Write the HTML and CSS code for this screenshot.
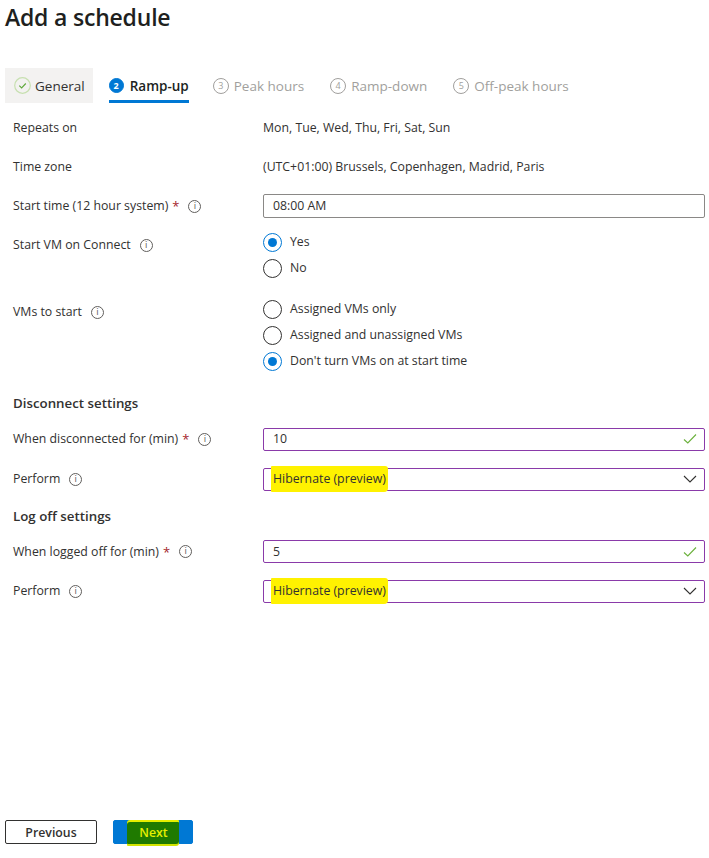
FILE: index.html
```html
<!DOCTYPE html>
<html>
<head>
<meta charset="utf-8">
<link rel="stylesheet" href="styles.css">
</head>
<body>
<div class="page">
  <h1 class="title">Add a schedule</h1>

  <div class="tabs">
    <div class="tab tab-done">
      <svg class="step-icon" width="17" height="17" viewBox="0 0 17 17"><circle cx="8.5" cy="8.5" r="7.8" fill="none" stroke="#c7e0b0" stroke-width="1.2"/><path d="M5.3 8.7 L7.6 10.9 L11.8 6.5" fill="none" stroke="#5ea83a" stroke-width="1.1"/></svg>
      <span>General</span>
    </div>
    <div class="tab tab-active">
      <span class="step-num step-num-active">2</span>
      <span>Ramp-up</span>
    </div>
    <div class="tab tab-disabled">
      <span class="step-num">3</span>
      <span>Peak hours</span>
    </div>
    <div class="tab tab-disabled">
      <span class="step-num">4</span>
      <span>Ramp-down</span>
    </div>
    <div class="tab tab-disabled">
      <span class="step-num">5</span>
      <span>Off-peak hours</span>
    </div>
  </div>

  <div class="form">
    <div class="row row-repeats">
      <div class="label">Repeats on</div>
      <div class="value">Mon, Tue, Wed, Thu, Fri, Sat, Sun</div>
    </div>
    <div class="row row-tz">
      <div class="label">Time zone</div>
      <div class="value">(UTC+01:00) Brussels, Copenhagen, Madrid, Paris</div>
    </div>
    <div class="row row-start">
      <div class="label">Start time (12 hour system)<span class="req">*</span><span class="info">i</span></div>
      <div class="value"><div class="input">08:00 AM</div></div>
    </div>
    <div class="row row-radio row-svc">
      <div class="label label-top">Start VM on Connect<span class="info">i</span></div>
      <div class="value radios">
        <div class="radio checked"><span class="dot"></span>Yes</div>
        <div class="radio"><span class="dot"></span>No</div>
      </div>
    </div>
    <div class="row row-radio row-vms">
      <div class="label label-top2">VMs to start<span class="info">i</span></div>
      <div class="value radios">
        <div class="radio"><span class="dot"></span>Assigned VMs only</div>
        <div class="radio"><span class="dot"></span>Assigned and unassigned VMs</div>
        <div class="radio checked"><span class="dot"></span>Don't turn VMs on at start time</div>
      </div>
    </div>

    <h2 class="section section-first">Disconnect settings</h2>
    <div class="row row-field">
      <div class="label">When disconnected for (min)<span class="req">*</span><span class="info">i</span></div>
      <div class="value"><div class="input input-valid"><span>10</span>
        <svg width="14" height="12" viewBox="0 0 14 12"><path d="M1 6.5 L4.8 10 L13 1.5" fill="none" stroke="#6bb13c" stroke-width="1.1"/></svg></div></div>
    </div>
    <div class="row row-field">
      <div class="label">Perform<span class="info">i</span></div>
      <div class="value"><div class="input input-valid"><span class="hl">Hibernate (preview)</span>
        <svg width="14" height="8" viewBox="0 0 14 8"><path d="M1 1 L7 7 L13 1" fill="none" stroke="#323130" stroke-width="1.1"/></svg></div></div>
    </div>

    <h2 class="section section-second">Log off settings</h2>
    <div class="row row-field row-field-short">
      <div class="label">When logged off for (min)<span class="req">*</span><span class="info">i</span></div>
      <div class="value"><div class="input input-valid"><span>5</span>
        <svg width="14" height="12" viewBox="0 0 14 12"><path d="M1 6.5 L4.8 10 L13 1.5" fill="none" stroke="#6bb13c" stroke-width="1.1"/></svg></div></div>
    </div>
    <div class="row row-field">
      <div class="label">Perform<span class="info">i</span></div>
      <div class="value"><div class="input input-valid"><span class="hl">Hibernate (preview)</span>
        <svg width="14" height="8" viewBox="0 0 14 8"><path d="M1 1 L7 7 L13 1" fill="none" stroke="#323130" stroke-width="1.1"/></svg></div></div>
    </div>
  </div>

  <div class="footer">
    <button class="btn btn-secondary">Previous</button>
    <button class="btn btn-primary"><span class="next-hl">Next</span></button>
  </div>
</div>
</body>
</html>
```

FILE: styles.css
```css
* { box-sizing: border-box; }
html, body { margin: 0; padding: 0; background: #ffffff; }
body {
  font-family: "Open Sans", "Noto Sans", "Liberation Sans", sans-serif;
  font-size: 12.3px;
  color: #323130;
}
.page {
  height: 858px;
  display: flex;
  flex-direction: column;
}
.title {
  margin: 0;
  padding: 0 0 0 5px;
  font-size: 23px;
  font-weight: 600;
  line-height: 34px;
  color: #201f1e;
  letter-spacing: -0.2px;
}
.tabs {
  display: flex;
  align-items: stretch;
  margin-top: 34px;
  padding-left: 5px;
  height: 35px;
  font-size: 13.5px;
}
.tab {
  display: flex;
  align-items: center;
  gap: 6px;
  white-space: nowrap;
}
.tab-done {
  background: #f3f2f1;
  padding: 0 8px 0 9px;
  gap: 4px;
}
.tab-active {
  margin-left: 16px;
  font-weight: 600;
  color: #201f1e;
  border-bottom: 3px solid #0078d4;
  padding-top: 3px;
  padding-right: 0;
}
.tab-disabled {
  margin-left: 24px;
  color: #a19f9d;
  gap: 5px;
}
.tab-disabled + .tab-disabled { margin-left: 26px; }
.step-num {
  width: 16px;
  height: 16px;
  border-radius: 50%;
  border: 1px solid #a19f9d;
  font-size: 9px;
  display: flex;
  align-items: center;
  justify-content: center;
  font-weight: 400;
  line-height: 1;
}
.step-num-active {
  width: 15px;
  height: 15px;
  background: #0078d4;
  border-color: #0078d4;
  color: #ffffff;
  font-weight: 700;
}
.form {
  padding-left: 13px;
  padding-top: 6px;
}
.row {
  display: grid;
  grid-template-columns: 250px 442px;
  align-items: center;
}
.row-repeats { height: 38px; }
.row-tz { height: 40px; }
.row-start { height: 38px; }
.row-radio { align-items: start; }
.row-svc { padding-top: 4px; }
.row-vms { padding-top: 15px; }
.label {
  display: flex;
  align-items: center;
  line-height: 20px;
  white-space: nowrap;
}
.label-top { margin-top: 6px; }
.label-top2 { margin-top: 6px; }
.value { line-height: 20px; white-space: nowrap; }
.req {
  color: #a4262c;
  margin-left: 4px;
  font-size: 13px;
}
.info {
  display: inline-flex;
  align-items: center;
  justify-content: center;
  width: 13px;
  height: 13px;
  border: 1px solid #605e5c;
  border-radius: 50%;
  font-size: 8.5px;
  font-family: "DejaVu Sans", sans-serif;
  color: #605e5c;
  margin-left: 9px;
  line-height: 1;
}
.input {
  height: 24px;
  border: 1px solid #8a8886;
  border-radius: 2px;
  padding: 0 10px 0 9px;
  display: flex;
  align-items: center;
  justify-content: space-between;
  font-size: 12.3px;
  color: #323130;
}
.input-valid {
  height: 23px;
  border-color: #8a3aa9;
  padding-right: 7px;
}
.hl {
  background: #fff200;
  margin-left: -2px;
  padding: 3px 2px 3px 2px;
  border-radius: 1px 3px 4px 1px;
}
.radios { display: flex; flex-direction: column; }
.radio {
  height: 26px;
  display: flex;
  align-items: center;
  gap: 8px;
}
.dot {
  width: 19px;
  height: 19px;
  border-radius: 50%;
  border: 1px solid #323130;
  position: relative;
  flex: none;
}
.radio.checked .dot { border-color: #0078d4; }
.radio.checked .dot::after {
  content: "";
  position: absolute;
  left: 4px;
  top: 4px;
  width: 9px;
  height: 9px;
  border-radius: 50%;
  background: #0078d4;
}
.section {
  margin: 0;
  font-size: 13.3px;
  font-weight: 600;
  line-height: 20px;
  color: #323130;
}
.section-first { margin-top: 19px; margin-bottom: 6px; }
.section-second { margin-top: 7px; margin-bottom: 6px; }
.row-field { height: 40px; }
.row-field-short { height: 39px; }
.footer {
  margin-top: auto;
  padding: 0 0 14px 5px;
  display: flex;
  gap: 16px;
}
.btn {
  height: 24px;
  font-family: inherit;
  font-size: 12.3px;
  font-weight: 600;
  border-radius: 2px;
  padding: 0;
  display: flex;
  align-items: center;
  justify-content: center;
}
.btn-secondary {
  width: 92px;
  background: #ffffff;
  border: 1px solid #323130;
  color: #323130;
}
.btn-primary {
  width: 80px;
  background: #0078d4;
  border: 1px solid #0078d4;
  color: #ffffff;
}
.next-hl {
  background: #1f7a00;
  color: #e6ef00;
  padding: 2px 11px 3px 12px;
  margin-top: 2px;
  box-shadow: 0 -2px 0 #e6ee00, 0 2px 0 #d4e400;
  border-radius: 3px 1px 3px 1px;
}
```
